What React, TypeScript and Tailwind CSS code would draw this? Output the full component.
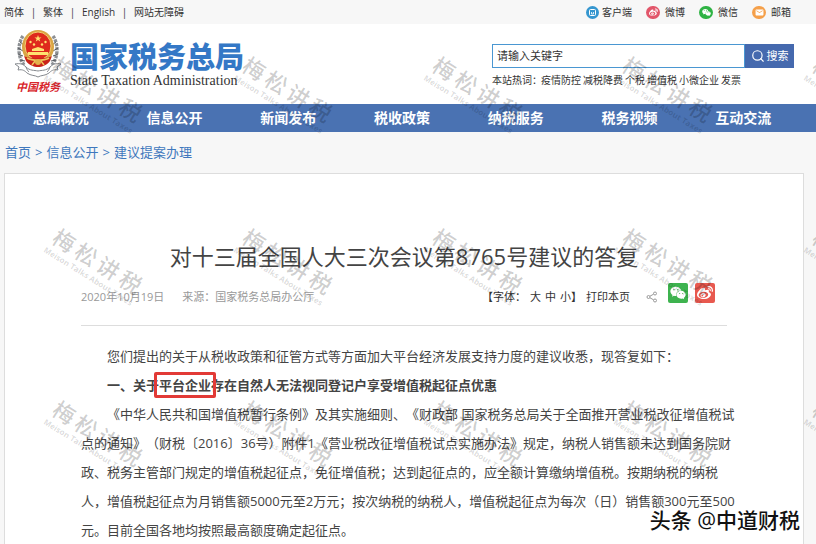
import { FaWeibo, FaWeixin } from 'react-icons/fa';
import { IoMdMail } from 'react-icons/io';
import { FiSearch } from 'react-icons/fi';

const languages = ['简体', '繁体', 'English', '网站无障碍'];
const navItems = ['总局概况', '信息公开', '新闻发布', '税收政策', '纳税服务', '税务视频', '互动交流'];
const hotWords = ['疫情防控', '减税降费', '个税', '增值税', '小微企业', '发票'];
const crumbs = ['首页', '信息公开', '建议提案办理'];

function Emblem() {
  return (
    <svg className="w-12 h-[50px]" viewBox="0 0 48 50" fill="none">
      {/* wheat wreath */}
      <path d="M9 7C4 14 3 27 10 36M39 7c5 7 6 20-1 29" stroke="#8d9094" strokeWidth="3.4" strokeDasharray="3 1" />
      <path d="M6 13l4 3M4 19l5 3M4 25l5 2M6 31l5 1M42 13l-4 3M44 19l-5 3M44 25l-5 2M42 31l-5 1" stroke="#55595e" strokeWidth="1" />
      {/* ribbon */}
      <path d="M1 35c5-1 8 0 11 3 4 4 8 3 12 4 4-1 8 0 12-4 3-3 6-4 11-3l-4 3 1 3c-5-1-7 1-9 3-4 3-8 2-11 4-3-2-7-1-11-4-2-2-4-4-9-3l1-3z" fill="#fff" stroke="#85898e" strokeWidth="1" />
      <path d="M12 38c1 3 2 4 3 5M36 38c-1 3-2 4-3 5" stroke="#85898e" strokeWidth="1" />
      {/* disc */}
      <ellipse cx="24" cy="18" rx="16" ry="17" fill="#d9a544" />
      <ellipse cx="24" cy="17" rx="13" ry="14" fill="#df2a1d" stroke="#f2cf70" strokeWidth="1" />
      <path d="M24 6l.9 2.500h2.600l-2.100 1.600.8 2.500-2.200-1.500-2.200 1.500.8-2.500-2.100-1.600h2.600z" fill="#ffe270" />
      <g fill="#ffe270">
        <circle cx="16.500" cy="13" r="1.200" />
        <circle cx="20" cy="15.500" r="1.200" />
        <circle cx="28" cy="15.500" r="1.200" />
        <circle cx="31.500" cy="13" r="1.200" />
        <path d="M18 20l6-2 6 2v2H18zM14 23h20v3H14z" />
      </g>
      <path d="M10 27c4 3 24 3 28 0l-2 5c-3 4-8 6-12 6s-9-2-12-6z" fill="#c9231a" />
      <path d="M13 29c5 3 17 3 22 0M18 36l3-4h6l3 4" stroke="#f0c65c" strokeWidth="1.500" />
      <circle cx="24" cy="33" r="3" fill="#e4b14c" />
    </svg>
  );
}

function Watermark() {
  return (
    <div className="flex items-center justify-center">
      <div className="rotate-[32deg] flex flex-col items-center">
        <div className="flex gap-1 text-[22px] leading-6 font-medium text-black/20">
          <span>梅</span>
          <span>松</span>
          <span>讲</span>
          <span>税</span>
        </div>
        <span className="text-[8px] leading-3 font-bold whitespace-nowrap text-black/15">Meison Talks About Taxes</span>
      </div>
    </div>
  );
}

export default function App() {
  return (
    <div className="relative h-screen overflow-hidden flex flex-col bg-[#f7f7f7] text-[#333] font-['Open_Sans','Noto_Sans_CJK_SC',sans-serif]">
      {/* Top bar */}
      <div className="h-6 shrink-0 flex items-center justify-between pl-1 pr-[25px] text-[10px]">
        <div className="flex items-center">
          {languages.map((label, i) => (
            <div key={label} className="flex items-center">
              {i > 0 && <span className="w-[19px] text-center">|</span>}
              <a href="#">{label}</a>
            </div>
          ))}
        </div>
        <div className="flex items-center gap-[14px]">
          <a href="#" className="flex items-center gap-[3px]">
            <svg className="w-[13px] h-[13px]" viewBox="0 0 13 13" fill="none">
              <circle cx="6.500" cy="6.500" r="6.500" fill="#3596cf" />
              <rect x="3.500" y="3.500" width="6" height="6" rx="1" stroke="#fff" />
              <path d="M5.500 6v2h2V6" stroke="#fff" strokeWidth=".8" />
            </svg>
            客户端
          </a>
          <a href="#" className="flex items-center gap-[5px]">
            <span className="w-[14px] h-[13px] rounded-full bg-[#e2566a] text-white flex items-center justify-center">
              <FaWeibo size={9} />
            </span>
            微博
          </a>
          <a href="#" className="flex items-center gap-[5px]">
            <span className="w-[14px] h-[13px] rounded-full bg-[#2fb344] text-white flex items-center justify-center">
              <FaWeixin size={9} />
            </span>
            微信
          </a>
          <a href="#" className="flex items-center gap-[5px]">
            <span className="w-[14px] h-[13px] rounded-full bg-[#f5a04a] text-white flex items-center justify-center">
              <IoMdMail size={9} />
            </span>
            邮箱
          </a>
        </div>
      </div>

      {/* Header */}
      <header className="h-20 shrink-0 flex justify-between bg-white pl-[14px] pr-[22px]">
        <div className="flex gap-2">
          <div className="flex flex-col items-center pt-[5px]">
            <Emblem />
            <span className="text-[11px] leading-4 font-bold italic text-[#d8262c]">中国税务</span>
          </div>
          <div className="pt-[17px]">
            <h1 className="text-[29px] leading-8 font-black text-[#3478c6]">国家税务总局</h1>
            <p className="font-['Liberation_Serif',serif] text-sm leading-4 text-[#333]">State Taxation Administration</p>
          </div>
        </div>
        <div className="pt-5">
          <form className="flex h-6 text-[11px]">
            <input
              type="text"
              aria-label="请输入关键字"
              defaultValue="请输入关键字"
              className="w-[253px] border border-[#4a97d2] bg-white px-1 outline-none"
            />
            <button type="button" className="w-[49px] flex items-center justify-center gap-[2px] bg-[#4569ae] text-white">
              <FiSearch size={14} />
              搜索
            </button>
          </form>
          <div className="flex gap-[2px] pt-1 text-[10px] leading-4">
            <span className="w-[47px] whitespace-nowrap">本站热词：</span>
            {hotWords.map((word) => (
              <a key={word} href="#">{word}</a>
            ))}
          </div>
        </div>
      </header>

      {/* Main navigation */}
      <nav className="h-7 shrink-0 flex items-center bg-[#4a72b2] pl-1 pr-4 text-sm font-bold text-white">
        {navItems.map((item) => (
          <a key={item} href="#" className="flex-1 text-center">{item}</a>
        ))}
      </nav>

      <div className="h-[41px] shrink-0 flex items-center gap-1 pl-[5px] text-[13px] text-[#3f78bd]">
        {crumbs.map((crumb, i) => (
          <div key={crumb} className="flex gap-1">
            {i > 0 && <span>&gt;</span>}
            <a href="#">{crumb}</a>
          </div>
        ))}
      </div>

      {/* Article */}
      <main className="flex-1 ml-1 mr-3 border border-b-0 border-[#ddd] bg-white px-[76px] pt-[62px]">
        <h2 className="text-center text-[22px] leading-10 text-[#444]">对十三届全国人大三次会议第8765号建议的答复</h2>
        <div className="mt-[7px] flex items-end justify-between border-b border-[#ddd] pb-[22px] pr-3 text-[11px] leading-3">
          <div className="flex gap-[18px] text-[#999]">
            <span>2020年10月19日</span>
            <span>来源：国家税务总局办公厅</span>
          </div>
          <div className="flex items-end">
            <div className="flex gap-1">
              <span>【字体：</span>
              <button type="button">大</button>
              <button type="button">中</button>
              <span><button type="button">小</button>】</span>
            </div>
            <button type="button" className="ml-1">打印本页</button>
            <svg className="ml-4 mr-[10px] w-3 h-3" viewBox="0 0 12 12" fill="none" stroke="#999">
              <circle cx="2.500" cy="6" r="1.500" />
              <circle cx="9" cy="2.500" r="1.500" />
              <circle cx="9" cy="9.500" r="1.500" />
              <path d="M4 5.200l3.500-2M4 6.800l3.500 2" />
            </svg>
            <button type="button" aria-label="微信" className="w-5 h-5 rounded-xs bg-[#3eb34f] text-white flex items-center justify-center">
              <FaWeixin size={16} />
            </button>
            <button type="button" aria-label="微博" className="ml-[7px] w-5 h-5 rounded-xs bg-[#e8594f] text-white flex items-center justify-center">
              <FaWeibo size={16} />
            </button>
          </div>
        </div>

        <div className="-mr-3 pt-4 text-[13px] leading-[29px] text-[#444] [text-spacing-trim:space-all]">
          <p className="indent-[26px]">您们提出的关于从税收政策和征管方式等方面加大平台经济发展支持力度的建议收悉，现答复如下：</p>
          <p className="indent-[26px] font-bold">
            一、关于
            <span className="relative">
              平台企业
              <span className="absolute -inset-x-[5px] -inset-y-1 rounded-xs border-3 border-[#e23a36]"></span>
            </span>
            存在自然人无法视同登记户享受增值税起征点优惠
          </p>
          <p className="indent-[26px]">
            《中华人民共和国增值税暂行条例》及其实施细则、《财政部 国家税务总局关于全面推开营业税改征增值税试点的通知》（财税〔2016〕36号）附件1《营业税改征增值税试点实施办法》规定，纳税人销售额未达到国务院财政、税务主管部门规定的增值税起征点，免征增值税；达到起征点的，应全额计算缴纳增值税。按期纳税的纳税人，增值税起征点为月销售额5000元至2万元；按次纳税的纳税人，增值税起征点为每次（日）销售额300元至500元。目前全国各地均按照最高额度确定起征点。
          </p>
        </div>
      </main>

      {/* Tiled watermark */}
      <div className="absolute inset-0 overflow-hidden pointer-events-none pt-2">
        <div className="grid grid-cols-[repeat(5,190px)] auto-rows-[172px]">
          {Array.from({ length: 15 }, (_, i) => (
            <Watermark key={i} />
          ))}
        </div>
      </div>

      <div className="absolute right-4 bottom-2 text-[21px] leading-8 font-medium text-[#111] [text-shadow:-1px_-1px_0_#fff,1px_1px_0_#fff,1px_-1px_0_#fff,-1px_1px_0_#fff]">
        头条 @中道财税
      </div>
    </div>
  );
}
